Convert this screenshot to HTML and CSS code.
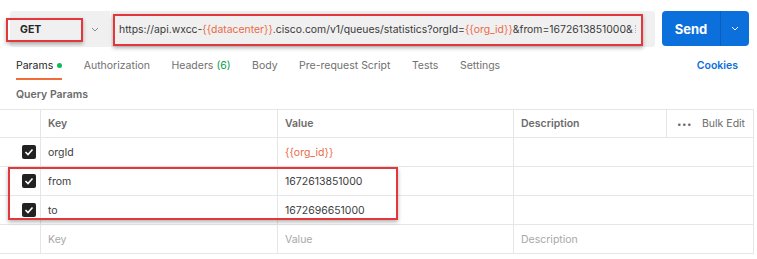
FILE: index.html
```html
<!DOCTYPE html>
<html lang="en">

<head>
    <meta charset="UTF-8" />
    <title>Request - Queue Statistics</title>
    <link rel="stylesheet" href="styles.css">
</head>

<body>
    <div class="request-bar">
        <div class="method">
            <span class="method-name">GET</span>
            <svg class="chevron" width="8" height="5" viewBox="0 0 8 5"><path d="M1 1l3 3 3-3" fill="none" stroke="#8a8a8a" stroke-width="1"/></svg>
        </div>
        <div class="url">
            <span class="url-text">https://api.wxcc-<span class="var">{{datacenter}}</span>.cisco.com/v1/queues/statistics?orgId=<span class="var">{{org_id}}</span>&amp;from=1672613851000&amp;</span>
            <span class="url-fade"></span>
        </div>
        <div class="send">
            <span class="send-label">Send</span>
            <span class="send-more">
                <svg width="8" height="5" viewBox="0 0 8 5"><path d="M1 1l3 3 3-3" fill="none" stroke="#fff" stroke-width="1"/></svg>
            </span>
        </div>
        <div class="mark mark-method"></div>
        <div class="mark mark-url"></div>
    </div>

    <div class="tabs">
        <span class="tab active">Params<span class="dot"></span></span>
        <span class="tab">Authorization</span>
        <span class="tab">Headers <span class="count">(6)</span></span>
        <span class="tab">Body</span>
        <span class="tab">Pre-request Script</span>
        <span class="tab">Tests</span>
        <span class="tab">Settings</span>
        <span class="cookies">Cookies</span>
    </div>

    <div class="section-title">Query Params</div>

    <div class="params">
        <div class="row head">
            <div class="cell check"></div>
            <div class="cell">Key</div>
            <div class="cell">Value</div>
            <div class="cell">Description</div>
            <div class="cell bulk"><span class="more">&bull;&bull;&bull;</span>Bulk Edit</div>
        </div>
        <div class="row">
            <div class="cell check"><span class="box"><svg width="10" height="8" viewBox="0 0 10 8"><path d="M1.5 4l2.5 2.5 4.5-5" fill="none" stroke="#fff" stroke-width="1.6"/></svg></span></div>
            <div class="cell">orgId</div>
            <div class="cell var">{{org_id}}</div>
            <div class="cell wide"></div>
        </div>
        <div class="row">
            <div class="cell check"><span class="box"><svg width="10" height="8" viewBox="0 0 10 8"><path d="M1.5 4l2.5 2.5 4.5-5" fill="none" stroke="#fff" stroke-width="1.6"/></svg></span></div>
            <div class="cell">from</div>
            <div class="cell">1672613851000</div>
            <div class="cell wide"></div>
        </div>
        <div class="row">
            <div class="cell check"><span class="box"><svg width="10" height="8" viewBox="0 0 10 8"><path d="M1.5 4l2.5 2.5 4.5-5" fill="none" stroke="#fff" stroke-width="1.6"/></svg></span></div>
            <div class="cell">to</div>
            <div class="cell">1672696651000</div>
            <div class="cell wide"></div>
        </div>
        <div class="row placeholder">
            <div class="cell check"></div>
            <div class="cell">Key</div>
            <div class="cell">Value</div>
            <div class="cell wide">Description</div>
        </div>
        <div class="mark mark-rows"></div>
    </div>
</body>

</html>
```

FILE: styles.css
```css
:root {
    --bar-bg: #f0f0f0;
    --border: #e6e6e6;
    --text: #3c3c3c;
    --muted: #6b6b6b;
    --faint: #a8a8a8;
    --var: #ea6a47;
    --blue: #0b6fdc;
    --mark: #e2383b;
}

* {
    margin: 0;
    padding: 0;
    box-sizing: border-box;
}

body {
    font-family: 'Inter', 'Noto Sans', sans-serif;
    font-size: 10.5px;
    color: var(--text);
    background: #fff;
    width: 757px;
    height: 259px;
    overflow: hidden;
}

/* request bar */
.request-bar {
    position: relative;
    display: flex;
    height: 47px;
    padding: 11px 8px 0 10px;
}

.method {
    display: flex;
    align-items: center;
    justify-content: space-between;
    width: 100px;
    height: 36px;
    padding: 0 11px 0 10px;
    background: var(--bar-bg);
    border-radius: 3px 0 0 3px;
}

.method-name {
    font-weight: 700;
    font-size: 10.5px;
    color: #262626;
}

.url {
    display: flex;
    align-items: center;
    width: 545px;
    height: 36px;
    padding: 0 8px 0 8px;
    background: var(--bar-bg);
    border-left: 1px solid #fafafa;
    border-radius: 0 3px 3px 0;
}

.url-text {
    white-space: nowrap;
    font-size: 10.4px;
    color: #3a3a3a;
}

.url-fade {
    width: 3px;
    height: 8px;
    margin-left: 2px;
    border-left: 1px dotted #b5b5b5;
}

.var {
    color: var(--var);
}

.send {
    display: flex;
    margin-left: 7px;
    width: 87px;
    height: 35px;
    background: var(--blue);
    border-radius: 4px;
    color: #fff;
}

.send-label {
    display: flex;
    align-items: center;
    justify-content: center;
    width: 58px;
    font-weight: 700;
    font-size: 13px;
}

.send-more {
    display: flex;
    align-items: center;
    justify-content: center;
    flex: 1;
    border-left: 1px solid #0a5fbd;
}

/* annotation boxes */
.mark {
    position: absolute;
    border: 2px solid var(--mark);
    box-shadow: 0 2px 4px rgba(0, 0, 0, 0.3);
    pointer-events: none;
}

.mark-method {
    left: 6px;
    top: 18px;
    width: 77px;
    height: 24px;
}

.mark-url {
    left: 113px;
    top: 14px;
    width: 530px;
    height: 32px;
}

/* tabs */
.tabs {
    display: flex;
    align-items: flex-start;
    height: 35px;
    padding: 12px 19px 0 16px;
}

.tab {
    position: relative;
    margin-right: 21.5px;
    padding-bottom: 6px;
    color: #707070;
}

.tab.active {
    color: #262626;
    border-bottom: 2px solid #f26b3a;
}

.dot {
    display: inline-block;
    width: 5px;
    height: 5px;
    margin-left: 4px;
    vertical-align: 1px;
    border-radius: 50%;
    background: #10b95b;
}

.count {
    color: #0a9b4c;
}

.cookies {
    margin-left: auto;
    color: var(--blue);
    font-weight: 600;
}

.section-title {
    height: 27px;
    padding: 6px 0 0 16px;
    font-weight: 600;
    color: var(--muted);
}

/* params table */
.params {
    position: relative;
    width: 754px;
    border-top: 1px solid var(--border);
    border-right: 1px solid var(--border);
}

.row {
    display: grid;
    grid-template-columns: 40px 237px 236px 153px 87px;
    height: 29px;
    border-bottom: 1px solid var(--border);
}

.row.head {
    height: 28px;
    font-weight: 600;
    color: var(--muted);
}

.cell {
    display: flex;
    align-items: center;
    padding-left: 7px;
    border-left: 1px solid var(--border);
}

.cell.check {
    border-left: none;
    padding-left: 22px;
}

.cell.wide {
    grid-column: span 2;
}

.bulk {
    font-weight: 400;
    padding-left: 10px;
}

.more {
    font-size: 8px;
    letter-spacing: 0.5px;
    margin-right: 10px;
}

.box {
    display: flex;
    align-items: center;
    justify-content: center;
    width: 14px;
    height: 14px;
    background: #222;
    border-radius: 2px;
}

.placeholder {
    color: var(--faint);
}

.mark-rows {
    left: 8px;
    top: 57px;
    width: 390px;
    height: 53px;
}
```
